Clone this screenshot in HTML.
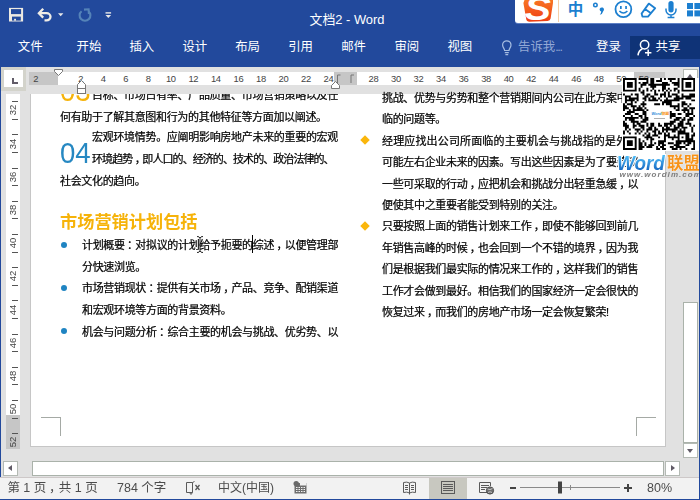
<!DOCTYPE html>
<html lang="zh-CN"><head><meta charset="utf-8"><title>文档2 - Word</title>
<style>
*{margin:0;padding:0;box-sizing:border-box}
html,body{width:700px;height:500px;overflow:hidden;background:#e1e1e1}
body{position:relative;font-family:"Liberation Sans","Noto Sans CJK SC",sans-serif;color:#222}
.abs,.tab,.ln,.st,.rn,.vn,.tk{position:absolute}
#top{left:0;top:0;width:700px;height:67px;background:#22499c}
#lborder{left:0;top:67px;width:1px;height:433px;background:#22499c}
#rborder{left:699px;top:67px;width:1px;height:433px;background:#22499c}
#bborder{left:0;top:499px;width:700px;height:1px;background:#22499c}
.tab{top:38px;font-size:12.4px;line-height:18px;color:#fff;white-space:nowrap}
#title{left:309.5px;top:9.5px;font-size:12.9px;line-height:20px;color:#fff;white-space:nowrap}
#share{left:630px;top:36px;width:70px;height:23px;background:#0f3377}
#ime{left:515px;top:0;width:185px;height:23px;background:#fff;border-bottom-left-radius:3px;box-shadow:0 1px 0 #5d7fc4}
#page{left:30px;top:94px;width:636px;height:353px;background:#fff;border-left:1px solid #c6c6c6;border-right:1px solid #c6c6c6;border-bottom:1px solid #c6c6c6}
.ln{font-size:11px;letter-spacing:-.33px;line-height:16px;height:16px;white-space:nowrap;text-align:justify;text-align-last:justify;color:#000;-webkit-text-stroke:.22px #000}
.ln.s{text-align-last:left;text-align:left}
.ln i{font-style:normal;position:relative;left:.22em}
.ln b{font-weight:normal;font-feature-settings:"halt"}
#status{left:0;top:477px;width:700px;height:23px;background:#f2f2f2;border-top:1px solid #cdc8c8}
.st{top:480px;font-size:12.5px;line-height:16px;color:#4c4c4c;white-space:nowrap}
.rn{top:71.6px;font-size:9.4px;line-height:13px;color:#444;width:20px;text-align:center;letter-spacing:-.3px}
.vn{left:6px;width:14px;height:14px;font-size:9.5px;line-height:14px;color:#444;text-align:center;transform:rotate(-90deg)}
.tk{left:12px;width:6px;height:1px;background:#555}
#root{position:absolute;left:0;top:0;width:700px;height:500px;overflow:hidden;opacity:.999}
</style></head><body><div id="root">

<div id="top" class="abs"></div>
<svg class="abs" style="left:0;top:0" width="130" height="30" viewBox="0 0 130 30">
<rect x="9" y="7.900" width="14.100" height="13.600" fill="#ece9e2"/>
<rect x="11" y="9.100" width="10.100" height="5" fill="#22499c"/>
<rect x="12" y="16.600" width="8.800" height="4" fill="#22499c"/>
<rect x="14.100" y="18.800" width="1.900" height="1.900" fill="#ece9e2"/>
<g fill="none" stroke="#efece6" stroke-width="2.300" stroke-linecap="butt">
<path d="M39.5 13.2 H46.5 A4 3.6 0 0 1 46.5 20.4 H44.5"/>
<path d="M43.2 8.8 L38.9 13.2 L43.2 17.6" stroke-linejoin="miter"/>
</g>
<path d="M58 13.2 h5.4 l-2.7 3z" fill="#e8e8e8"/>
<g fill="none" stroke="#5583b8" stroke-width="2.1">
<path d="M81.6 11.2 A5.4 5.4 0 1 0 88.4 11.2"/>
<path d="M84 9.6 L88.6 9.3 L88.9 14" />
</g>
<rect x="105.5" y="12.2" width="5.6" height="1.4" fill="#e8e8e8"/>
<path d="M105.5 15 h5.6 l-2.8 3z" fill="#e8e8e8"/>
</svg>
<div id="title" class="abs">文档2 - Word</div>
<div class="tab" style="left:17.8px">文件</div>
<div class="tab" style="left:76.6px">开始</div>
<div class="tab" style="left:129.4px">插入</div>
<div class="tab" style="left:182.4px">设计</div>
<div class="tab" style="left:235.2px">布局</div>
<div class="tab" style="left:288.2px">引用</div>
<div class="tab" style="left:341.2px">邮件</div>
<div class="tab" style="left:394.4px">审阅</div>
<div class="tab" style="left:447.4px">视图</div>
<svg class="abs" style="left:500.4px;top:38.8px" width="14" height="18" viewBox="0 0 14 18"><g fill="none" stroke="#a6bde2" stroke-width="1.2"><path d="M4.6 11.5 C4.6 9.5 2.6 8.6 2.6 6 A4.2 4.2 0 0 1 11 6 C11 8.6 9 9.5 9 11.5 Z"/><path d="M4.8 13.6 H8.8 M5.4 15.6 H8.2"/></g></svg>
<div class="tab" style="left:518px;color:#92a8d6">告诉我<span style="letter-spacing:-1.3px">...</span></div>
<div class="tab" style="left:596px">登录</div>
<div id="share" class="abs"></div>
<svg class="abs" style="left:636px;top:39px" width="18" height="18" viewBox="0 0 18 18"><g fill="none" stroke="#fff" stroke-width="1.5"><circle cx="8.6" cy="5.8" r="4.2"/><path d="M2 16.4 C2.4 12.8 4.6 10.6 6.4 9.8"/><path d="M12.2 10.6 V17 M9 13.8 H15.4"/></g></svg>
<div class="tab" style="left:655.5px">共享</div>
<div id="ime" class="abs"></div>
<svg class="abs" style="left:515px;top:0" width="185" height="24" viewBox="0 0 185 24">
<defs><linearGradient id="sg" x1="0" y1="0" x2="0" y2="1"><stop offset="0" stop-color="#f87524"/><stop offset="1" stop-color="#ee3d14"/></linearGradient><clipPath id="sc"><path d="M9.500 0 H38 L38 3 L35.600 18.600 Q35.200 21 32.600 21 L14.500 21.800 Q11.600 21.800 11.200 19 L8.400 3 Z"/></clipPath></defs><path d="M9.500 0 H38 L38 3 L35.600 18.600 Q35.200 21 32.600 21 L14.500 21.800 Q11.600 21.800 11.200 19 L8.400 3 Z" fill="url(#sg)"/>
<text x="0" y="0" transform="translate(22.800 19.800) scale(1.220 1)" font-family="Liberation Sans,sans-serif" font-weight="bold" font-style="italic" font-size="32.500" fill="#fff" text-anchor="middle" clip-path="none">S</text>
<rect x="43" y="0" width="1" height="22" fill="#f6cfa8"/>
<g fill="none" stroke="#1c7fd0" stroke-width="1.5">
<circle cx="108.4" cy="9.2" r="7.9" stroke-width="1.8"/>
<path d="M104.4 11 Q108.4 15 112.4 11"/>
<path d="M126.600 13.6 L133.800 3.600 L140.200 8.200 L133 16.600 H127.400 Z M130 9 L136 13.300" stroke-linejoin="round" stroke-width="1.800"/>
<path d="M151 8.5 V10 A5 5 0 0 0 161 10 V8.5 M156 15 V17.4 M152.6 17.4 H159.4"/>
</g>
<g fill="#1c7fd0">
<rect x="105" y="6" width="1.7" height="3"/><rect x="110.2" y="6" width="1.7" height="3"/>
<rect x="153.4" y="1" width="5.2" height="11.4" rx="2.6"/>
<rect x="172" y="3" width="6" height="6"/><rect x="179.4" y="3" width="6" height="6"/>
<rect x="172" y="10.4" width="6" height="6"/><rect x="179.4" y="10.4" width="6" height="6"/>
<circle cx="80.4" cy="5" r="2.500"/>
<path d="M84.600 9.6 a2.200 2.200 0 1 1 3.600 1.700 q-0.500 2.800 -3.400 3.500 q1.600 -1.600 1.400 -3.200 a2.200 2.200 0 0 1 -1.600 -2z"/>
</g>
<circle cx="80.4" cy="5" r="1" fill="#fff"/>
<text x="60.4" y="14.600" font-family="Liberation Sans,Noto Sans CJK SC,sans-serif" font-weight="bold" font-size="15.500" fill="#1c7fd0" text-anchor="middle">中</text>
</svg>
<div id="lborder" class="abs"></div>
<div class="abs" style="left:1px;top:67px;width:24.7px;height:24px;background:#d3d3cb"></div>
<div class="abs" style="left:4.2px;top:70.3px;width:18.4px;height:16.7px;background:#fff"></div>
<div class="abs" style="left:12px;top:78px;width:1.8px;height:6px;background:#625c68"></div><div class="abs" style="left:12px;top:82.2px;width:6px;height:1.8px;background:#625c68"></div>
<div class="abs" style="left:29px;top:72px;width:636px;height:13px;background:#fff"></div>
<div class="abs" style="left:29px;top:72px;width:29px;height:13px;background:#c6c6c6"></div>
<div class="abs" style="left:333.5px;top:72px;width:23.5px;height:13px;background:#c6c6c6"></div>
<div class="abs" style="left:633.5px;top:72px;width:31.5px;height:13px;background:#c6c6c6"></div>
<div class="rn" style="left:25.7px">2</div>
<div class="rn" style="left:70.7px">2</div>
<div class="rn" style="left:93.2px">4</div>
<div class="rn" style="left:115.8px">6</div>
<div class="rn" style="left:138.3px">8</div>
<div class="rn" style="left:160.8px">10</div>
<div class="rn" style="left:183.3px">12</div>
<div class="rn" style="left:205.8px">14</div>
<div class="rn" style="left:228.4px">16</div>
<div class="rn" style="left:250.9px">18</div>
<div class="rn" style="left:273.4px">20</div>
<div class="rn" style="left:295.9px">22</div>
<div class="rn" style="left:318.4px">24</div>
<div class="rn" style="left:363.5px">28</div>
<div class="rn" style="left:386.0px">30</div>
<div class="rn" style="left:408.5px">32</div>
<div class="rn" style="left:431.0px">34</div>
<div class="rn" style="left:453.6px">36</div>
<div class="rn" style="left:476.1px">38</div>
<div class="rn" style="left:498.6px">40</div>
<div class="rn" style="left:521.1px">42</div>
<div class="rn" style="left:543.6px">44</div>
<div class="rn" style="left:566.2px">46</div>
<div class="rn" style="left:588.7px">48</div>
<div class="rn" style="left:611.2px">50</div>
<div class="rn" style="left:633.7px">52</div>
<svg class="abs" style="left:50px;top:66px;z-index:5" width="320" height="32" viewBox="0 0 320 32">
<g fill="#fff" stroke="#777" stroke-width="1">
<path d="M4.5 3.5 H12.5 V5.5 L8.5 9.5 L4.5 5.5 Z"/>
<path d="M27.5 22.500 V18.5 L31.5 14.5 L35.5 18.5 V22.500 Z"/>
<rect x="27.5" y="22.500" width="8" height="5"/>
<path d="M281.5 22.5 V19.5 L285.5 15.5 L289.5 19.5 V22.5 Z"/>
</g>
<g fill="none" stroke="#777" stroke-width="1"><path d="M290.5 9 H287.5 V17 M304 9 H301 V17"/></g>
</svg>
<div class="abs" style="left:6px;top:94px;width:14px;height:355px;background:#fff"></div>
<div class="abs" style="left:6px;top:415px;width:14px;height:34px;background:#c6c6c6"></div>
<div class="vn" style="top:103.4px">32</div>
<div class="tk" style="top:101.1px"></div>
<div class="tk" style="top:118.7px"></div>
<div class="vn" style="top:136.6px">34</div>
<div class="tk" style="top:134.3px"></div>
<div class="tk" style="top:151.9px"></div>
<div class="vn" style="top:169.8px">36</div>
<div class="tk" style="top:167.5px"></div>
<div class="tk" style="top:185.1px"></div>
<div class="vn" style="top:203.0px">38</div>
<div class="tk" style="top:200.7px"></div>
<div class="tk" style="top:218.3px"></div>
<div class="vn" style="top:236.2px">40</div>
<div class="tk" style="top:233.9px"></div>
<div class="tk" style="top:251.5px"></div>
<div class="vn" style="top:269.4px">42</div>
<div class="tk" style="top:267.1px"></div>
<div class="tk" style="top:284.7px"></div>
<div class="vn" style="top:302.6px">44</div>
<div class="tk" style="top:300.3px"></div>
<div class="tk" style="top:317.9px"></div>
<div class="vn" style="top:335.8px">46</div>
<div class="tk" style="top:333.5px"></div>
<div class="tk" style="top:351.1px"></div>
<div class="vn" style="top:369.0px">48</div>
<div class="tk" style="top:366.7px"></div>
<div class="tk" style="top:384.3px"></div>
<div class="vn" style="top:402.2px">50</div>
<div class="tk" style="top:399.9px"></div>
<div class="tk" style="top:417.5px"></div>
<div class="vn" style="top:435.4px">52</div>
<div class="tk" style="top:433.1px"></div>
<div id="page" class="abs"></div>
<div class="abs" style="left:41px;top:417px;width:20px;height:1px;background:#a5aaa5"></div><div class="abs" style="left:60px;top:417px;width:1px;height:19px;background:#a5aaa5"></div>
<div class="abs" style="left:636px;top:417px;width:20px;height:1px;background:#a5aaa5"></div><div class="abs" style="left:636px;top:417px;width:1px;height:19px;background:#a5aaa5"></div>
<div class="abs" style="left:31px;top:94px;width:634px;height:30px;overflow:hidden">
<div class="abs" style="left:29px;top:-18.5px;font-size:30px;line-height:30px;color:#f6b30a;transform-origin:0 0;transform:scaleX(.92);white-space:nowrap">03</div>
<div class="ln" style="left:61px;top:-6.6px;width:246px">目标、市场占有率、产品质量、市场营销策略以及任</div>
</div>
<div class="ln s" style="left:60px;top:109.4px;width:278px">何有助于了解其意图和行为的其他特征等方面加以阐述。</div>
<div class="abs" style="left:59.5px;top:135.5px;font-size:30px;line-height:34px;color:#2688c2;transform-origin:0 0;transform:scaleX(.92);white-space:nowrap">04</div>
<div class="ln" style="left:92px;top:129.3px;width:246px">宏观环境情势。应阐明影响房地产未来的重要的宏观</div>
<div class="ln s" style="left:92px;top:150.7px;width:246px;letter-spacing:-.93px">环境趋势<i>，</i>即人口的、经济的、技术的、政治法律的、</div>
<div class="ln s" style="left:60px;top:173.3px;width:278px">社会文化的趋向。</div>
<div class="abs" style="left:60px;top:210px;font-size:17.2px;line-height:24px;font-weight:bold;color:#f6b30a;white-space:nowrap">市场营销计划包括</div>
<div class="ln" style="left:82px;top:237.2px;width:256px">计划概要<i>：</i>对拟议的计划给予扼要的综述<i>，</i>以便管理部</div>
<div class="abs" style="left:60.9px;top:241.6px;width:6.4px;height:6.4px;border-radius:3.2px;background:#1f84c2"></div>
<div class="ln s" style="left:82px;top:258.8px;width:256px">分快速浏览。</div>
<div class="ln" style="left:82px;top:280.4px;width:256px">市场营销现状<i>：</i>提供有关市场<i>，</i>产品、竞争、配销渠道</div>
<div class="abs" style="left:60.9px;top:284.8px;width:6.4px;height:6.4px;border-radius:3.2px;background:#1f84c2"></div>
<div class="ln s" style="left:82px;top:302.0px;width:256px">和宏观环境等方面的背景资料。</div>
<div class="ln" style="left:82px;top:323.6px;width:256px">机会与问题分析<i>：</i>综合主要的机会与挑战、优劣势、以</div>
<div class="abs" style="left:60.9px;top:328.0px;width:6.4px;height:6.4px;border-radius:3.2px;background:#1f84c2"></div>
<div class="ln" style="left:382px;top:89.7px;width:256px">挑战、优势与劣势和整个营销期间内公司在此方案中面</div>
<div class="ln s" style="left:382px;top:111.1px;width:256px">临的问题等。</div>
<div class="ln" style="left:382px;top:132.6px;width:256px">经理应找出公司所面临的主要机会与挑战指的是外部</div>
<div class="abs" style="left:361.3px;top:136.4px;width:8px;height:8px;background:#fab60c;transform:rotate(45deg) scale(.84)"></div>
<div class="ln" style="left:382px;top:154.0px;width:256px">可能左右企业未来的因素。写出这些因素是为了要建议</div>
<div class="ln" style="left:382px;top:175.5px;width:256px">一些可采取的行动<i>，</i>应把机会和挑战分出轻重急缓<i>，</i>以</div>
<div class="ln s" style="left:382px;top:196.9px;width:256px">便使其中之重要者能受到特别的关注。</div>
<div class="ln" style="left:382px;top:218.4px;width:256px">只要按照上面的销售计划来工作<i>，</i>即使不能够回到前几</div>
<div class="abs" style="left:361.3px;top:222.2px;width:8px;height:8px;background:#fab60c;transform:rotate(45deg) scale(.84)"></div>
<div class="ln" style="left:382px;top:239.8px;width:256px">年销售高峰的时候<i>，</i>也会回到一个不错的境界<i>，</i>因为我</div>
<div class="ln" style="left:382px;top:261.3px;width:256px">们是根据我们最实际的情况来工作的<i>，</i>这样我们的销售</div>
<div class="ln" style="left:382px;top:282.7px;width:256px">工作才会做到最好。相信我们的国家经济一定会很快的</div>
<div class="ln s" style="left:382px;top:304.2px;width:256px">恢复过来<i>，</i>而我们的房地产市场一定会恢复繁荣!</div>
<div class="abs" style="left:252px;top:235px;width:1px;height:18px;background:#000"></div>
<svg class="abs" style="left:194.900px;top:234.500px" width="10" height="19" viewBox="0 0 10 19"><path d="M2 1.500 Q4.500 1.500 5 3 Q5.500 1.500 8 1.500 M5 3 V16 M2 17.500 Q4.500 17.500 5 16 Q5.500 17.500 8 17.500 M3.500 10 H6.500" fill="none" stroke="#222" stroke-width="1"/></svg>
<div class="abs" style="left:683px;top:69px;width:15px;height:14px;background:#fff;border:1px solid #b4bab4"></div>
<div class="abs" style="left:687px;top:74px;width:0;height:0;border-left:3.5px solid transparent;border-right:3.5px solid transparent;border-bottom:4px solid #605a66"></div>
<div class="abs" style="left:683px;top:302px;width:15px;height:141px;background:#fff;border:1px solid #aab2aa"></div>
<div class="abs" style="left:683px;top:443px;width:15px;height:15px;background:#fff;border:1px solid #b4bab4"></div>
<div class="abs" style="left:687px;top:449px;width:0;height:0;border-left:3.5px solid transparent;border-right:3.5px solid transparent;border-top:4px solid #605a66"></div>
<div class="abs" style="left:3px;top:461px;width:15px;height:15px;background:#fff;border:1px solid #b4bab4"></div>
<div class="abs" style="left:8px;top:465px;width:0;height:0;border-top:3.5px solid transparent;border-bottom:3.5px solid transparent;border-right:4px solid #605a66"></div>
<div class="abs" style="left:32px;top:461px;width:632px;height:15px;background:#fff;border:1px solid #aab2aa"></div>
<div class="abs" style="left:665px;top:461px;width:15px;height:15px;background:#fff;border:1px solid #b4bab4"></div>
<div class="abs" style="left:671px;top:465px;width:0;height:0;border-top:3.5px solid transparent;border-bottom:3.5px solid transparent;border-left:4px solid #605a66"></div>
<div class="abs" style="left:622.4px;top:77.6px;width:76.4px;height:73px;background:#fff"></div>
<svg class="abs" style="left:622.9px;top:78px" width="72.2" height="72" viewBox="0 0 71.2 71.2" preserveAspectRatio="none"><path d="M0.00 0.00h13.47v1.92h-13.47zM15.39 0.00h9.62v1.92h-9.62zM26.94 0.00h3.85v1.92h-3.85zM36.56 0.00h1.92v1.92h-1.92zM40.41 0.00h1.92v1.92h-1.92zM44.26 0.00h7.70v1.92h-7.70zM53.88 0.00h1.92v1.92h-1.92zM57.73 0.00h13.47v1.92h-13.47zM0.00 1.92h1.92v1.92h-1.92zM11.55 1.92h1.92v1.92h-1.92zM23.09 1.92h1.92v1.92h-1.92zM26.94 1.92h3.85v1.92h-3.85zM32.71 1.92h5.77v1.92h-5.77zM46.18 1.92h1.92v1.92h-1.92zM53.88 1.92h1.92v1.92h-1.92zM57.73 1.92h1.92v1.92h-1.92zM69.28 1.92h1.92v1.92h-1.92zM0.00 3.85h1.92v1.92h-1.92zM3.85 3.85h5.77v1.92h-5.77zM11.55 3.85h1.92v1.92h-1.92zM15.39 3.85h1.92v1.92h-1.92zM19.24 3.85h5.77v1.92h-5.77zM26.94 3.85h3.85v1.92h-3.85zM38.49 3.85h5.77v1.92h-5.77zM48.11 3.85h7.70v1.92h-7.70zM57.73 3.85h1.92v1.92h-1.92zM61.58 3.85h5.77v1.92h-5.77zM69.28 3.85h1.92v1.92h-1.92zM0.00 5.77h1.92v1.92h-1.92zM3.85 5.77h5.77v1.92h-5.77zM11.55 5.77h1.92v1.92h-1.92zM17.32 5.77h5.77v1.92h-5.77zM25.02 5.77h21.17v1.92h-21.17zM50.03 5.77h5.77v1.92h-5.77zM57.73 5.77h1.92v1.92h-1.92zM61.58 5.77h5.77v1.92h-5.77zM69.28 5.77h1.92v1.92h-1.92zM0.00 7.70h1.92v1.92h-1.92zM3.85 7.70h5.77v1.92h-5.77zM11.55 7.70h1.92v1.92h-1.92zM17.32 7.70h1.92v1.92h-1.92zM26.94 7.70h5.77v1.92h-5.77zM38.49 7.70h3.85v1.92h-3.85zM53.88 7.70h1.92v1.92h-1.92zM57.73 7.70h1.92v1.92h-1.92zM61.58 7.70h5.77v1.92h-5.77zM69.28 7.70h1.92v1.92h-1.92zM0.00 9.62h1.92v1.92h-1.92zM11.55 9.62h1.92v1.92h-1.92zM15.39 9.62h1.92v1.92h-1.92zM23.09 9.62h1.92v1.92h-1.92zM28.86 9.62h1.92v1.92h-1.92zM38.49 9.62h3.85v1.92h-3.85zM44.26 9.62h1.92v1.92h-1.92zM50.03 9.62h3.85v1.92h-3.85zM57.73 9.62h1.92v1.92h-1.92zM69.28 9.62h1.92v1.92h-1.92zM0.00 11.55h13.47v1.92h-13.47zM15.39 11.55h1.92v1.92h-1.92zM19.24 11.55h1.92v1.92h-1.92zM23.09 11.55h1.92v1.92h-1.92zM26.94 11.55h1.92v1.92h-1.92zM30.79 11.55h1.92v1.92h-1.92zM34.64 11.55h1.92v1.92h-1.92zM38.49 11.55h1.92v1.92h-1.92zM42.34 11.55h1.92v1.92h-1.92zM46.18 11.55h1.92v1.92h-1.92zM50.03 11.55h1.92v1.92h-1.92zM53.88 11.55h1.92v1.92h-1.92zM57.73 11.55h13.47v1.92h-13.47zM17.32 13.47h3.85v1.92h-3.85zM30.79 13.47h1.92v1.92h-1.92zM40.41 13.47h1.92v1.92h-1.92zM44.26 13.47h1.92v1.92h-1.92zM53.88 13.47h1.92v1.92h-1.92zM0.00 15.39h1.92v1.92h-1.92zM7.70 15.39h1.92v1.92h-1.92zM11.55 15.39h3.85v1.92h-3.85zM19.24 15.39h1.92v1.92h-1.92zM23.09 15.39h3.85v1.92h-3.85zM30.79 15.39h3.85v1.92h-3.85zM36.56 15.39h5.77v1.92h-5.77zM44.26 15.39h1.92v1.92h-1.92zM48.11 15.39h5.77v1.92h-5.77zM57.73 15.39h1.92v1.92h-1.92zM65.43 15.39h5.77v1.92h-5.77zM1.92 17.32h5.77v1.92h-5.77zM13.47 17.32h1.92v1.92h-1.92zM21.17 17.32h3.85v1.92h-3.85zM26.94 17.32h3.85v1.92h-3.85zM36.56 17.32h1.92v1.92h-1.92zM40.41 17.32h1.92v1.92h-1.92zM44.26 17.32h3.85v1.92h-3.85zM51.96 17.32h3.85v1.92h-3.85zM57.73 17.32h13.47v1.92h-13.47zM1.92 19.24h1.92v1.92h-1.92zM5.77 19.24h9.62v1.92h-9.62zM19.24 19.24h3.85v1.92h-3.85zM25.02 19.24h1.92v1.92h-1.92zM28.86 19.24h3.85v1.92h-3.85zM34.64 19.24h1.92v1.92h-1.92zM42.34 19.24h1.92v1.92h-1.92zM50.03 19.24h9.62v1.92h-9.62zM61.58 19.24h5.77v1.92h-5.77zM1.92 21.17h9.62v1.92h-9.62zM13.47 21.17h1.92v1.92h-1.92zM21.17 21.17h1.92v1.92h-1.92zM25.02 21.17h9.62v1.92h-9.62zM36.56 21.17h1.92v1.92h-1.92zM40.41 21.17h15.39v1.92h-15.39zM67.35 21.17h3.85v1.92h-3.85zM1.92 23.09h1.92v1.92h-1.92zM7.70 23.09h1.92v1.92h-1.92zM11.55 23.09h1.92v1.92h-1.92zM19.24 23.09h1.92v1.92h-1.92zM38.49 23.09h9.62v1.92h-9.62zM57.73 23.09h3.85v1.92h-3.85zM0.00 25.02h1.92v1.92h-1.92zM3.85 25.02h5.77v1.92h-5.77zM17.32 25.02h5.77v1.92h-5.77zM30.79 25.02h5.77v1.92h-5.77zM38.49 25.02h1.92v1.92h-1.92zM42.34 25.02h5.77v1.92h-5.77zM53.88 25.02h1.92v1.92h-1.92zM57.73 25.02h5.77v1.92h-5.77zM65.43 25.02h1.92v1.92h-1.92zM0.00 26.94h3.85v1.92h-3.85zM7.70 26.94h5.77v1.92h-5.77zM15.39 26.94h1.92v1.92h-1.92zM19.24 26.94h1.92v1.92h-1.92zM46.18 26.94h9.62v1.92h-9.62zM57.73 26.94h1.92v1.92h-1.92zM63.50 26.94h1.92v1.92h-1.92zM0.00 28.86h5.77v1.92h-5.77zM9.62 28.86h1.92v1.92h-1.92zM13.47 28.86h5.77v1.92h-5.77zM21.17 28.86h1.92v1.92h-1.92zM50.03 28.86h1.92v1.92h-1.92zM53.88 28.86h1.92v1.92h-1.92zM59.65 28.86h3.85v1.92h-3.85zM65.43 28.86h5.77v1.92h-5.77zM0.00 30.79h1.92v1.92h-1.92zM5.77 30.79h1.92v1.92h-1.92zM9.62 30.79h11.55v1.92h-11.55zM23.09 30.79h1.92v1.92h-1.92zM51.96 30.79h3.85v1.92h-3.85zM57.73 30.79h7.70v1.92h-7.70zM67.35 30.79h1.92v1.92h-1.92zM3.85 32.71h7.70v1.92h-7.70zM19.24 32.71h3.85v1.92h-3.85zM46.18 32.71h1.92v1.92h-1.92zM59.65 32.71h1.92v1.92h-1.92zM63.50 32.71h1.92v1.92h-1.92zM67.35 32.71h1.92v1.92h-1.92zM1.92 34.64h5.77v1.92h-5.77zM11.55 34.64h3.85v1.92h-3.85zM19.24 34.64h3.85v1.92h-3.85zM46.18 34.64h5.77v1.92h-5.77zM53.88 34.64h3.85v1.92h-3.85zM61.58 34.64h7.70v1.92h-7.70zM0.00 36.56h1.92v1.92h-1.92zM7.70 36.56h1.92v1.92h-1.92zM15.39 36.56h3.85v1.92h-3.85zM21.17 36.56h1.92v1.92h-1.92zM46.18 36.56h5.77v1.92h-5.77zM61.58 36.56h3.85v1.92h-3.85zM69.28 36.56h1.92v1.92h-1.92zM1.92 38.49h13.47v1.92h-13.47zM17.32 38.49h1.92v1.92h-1.92zM21.17 38.49h3.85v1.92h-3.85zM46.18 38.49h1.92v1.92h-1.92zM51.96 38.49h5.77v1.92h-5.77zM59.65 38.49h1.92v1.92h-1.92zM65.43 38.49h3.85v1.92h-3.85zM1.92 40.41h1.92v1.92h-1.92zM5.77 40.41h5.77v1.92h-5.77zM19.24 40.41h5.77v1.92h-5.77zM50.03 40.41h5.77v1.92h-5.77zM57.73 40.41h3.85v1.92h-3.85zM63.50 40.41h5.77v1.92h-5.77zM0.00 42.34h1.92v1.92h-1.92zM7.70 42.34h7.70v1.92h-7.70zM17.32 42.34h5.77v1.92h-5.77zM46.18 42.34h5.77v1.92h-5.77zM55.81 42.34h3.85v1.92h-3.85zM63.50 42.34h1.92v1.92h-1.92zM0.00 44.26h3.85v1.92h-3.85zM9.62 44.26h1.92v1.92h-1.92zM13.47 44.26h3.85v1.92h-3.85zM23.09 44.26h1.92v1.92h-1.92zM26.94 44.26h3.85v1.92h-3.85zM34.64 44.26h1.92v1.92h-1.92zM40.41 44.26h9.62v1.92h-9.62zM53.88 44.26h5.77v1.92h-5.77zM61.58 44.26h5.77v1.92h-5.77zM0.00 46.18h5.77v1.92h-5.77zM9.62 46.18h3.85v1.92h-3.85zM15.39 46.18h5.77v1.92h-5.77zM23.09 46.18h1.92v1.92h-1.92zM26.94 46.18h3.85v1.92h-3.85zM34.64 46.18h3.85v1.92h-3.85zM40.41 46.18h3.85v1.92h-3.85zM46.18 46.18h1.92v1.92h-1.92zM50.03 46.18h1.92v1.92h-1.92zM53.88 46.18h5.77v1.92h-5.77zM65.43 46.18h1.92v1.92h-1.92zM69.28 46.18h1.92v1.92h-1.92zM1.92 48.11h3.85v1.92h-3.85zM9.62 48.11h1.92v1.92h-1.92zM17.32 48.11h3.85v1.92h-3.85zM25.02 48.11h3.85v1.92h-3.85zM30.79 48.11h1.92v1.92h-1.92zM38.49 48.11h1.92v1.92h-1.92zM42.34 48.11h3.85v1.92h-3.85zM50.03 48.11h5.77v1.92h-5.77zM57.73 48.11h5.77v1.92h-5.77zM67.35 48.11h1.92v1.92h-1.92zM1.92 50.03h1.92v1.92h-1.92zM5.77 50.03h1.92v1.92h-1.92zM11.55 50.03h5.77v1.92h-5.77zM19.24 50.03h1.92v1.92h-1.92zM23.09 50.03h5.77v1.92h-5.77zM30.79 50.03h3.85v1.92h-3.85zM38.49 50.03h15.39v1.92h-15.39zM55.81 50.03h1.92v1.92h-1.92zM59.65 50.03h1.92v1.92h-1.92zM67.35 50.03h1.92v1.92h-1.92zM0.00 51.96h1.92v1.92h-1.92zM3.85 51.96h1.92v1.92h-1.92zM13.47 51.96h1.92v1.92h-1.92zM17.32 51.96h1.92v1.92h-1.92zM23.09 51.96h1.92v1.92h-1.92zM28.86 51.96h3.85v1.92h-3.85zM34.64 51.96h1.92v1.92h-1.92zM38.49 51.96h1.92v1.92h-1.92zM42.34 51.96h1.92v1.92h-1.92zM48.11 51.96h3.85v1.92h-3.85zM53.88 51.96h7.70v1.92h-7.70zM67.35 51.96h1.92v1.92h-1.92zM0.00 53.88h1.92v1.92h-1.92zM5.77 53.88h1.92v1.92h-1.92zM11.55 53.88h1.92v1.92h-1.92zM15.39 53.88h1.92v1.92h-1.92zM21.17 53.88h1.92v1.92h-1.92zM25.02 53.88h1.92v1.92h-1.92zM30.79 53.88h1.92v1.92h-1.92zM34.64 53.88h3.85v1.92h-3.85zM40.41 53.88h1.92v1.92h-1.92zM44.26 53.88h1.92v1.92h-1.92zM53.88 53.88h11.55v1.92h-11.55zM69.28 53.88h1.92v1.92h-1.92zM19.24 55.81h1.92v1.92h-1.92zM23.09 55.81h3.85v1.92h-3.85zM28.86 55.81h5.77v1.92h-5.77zM40.41 55.81h5.77v1.92h-5.77zM50.03 55.81h1.92v1.92h-1.92zM53.88 55.81h1.92v1.92h-1.92zM61.58 55.81h3.85v1.92h-3.85zM67.35 55.81h3.85v1.92h-3.85zM0.00 57.73h13.47v1.92h-13.47zM21.17 57.73h7.70v1.92h-7.70zM34.64 57.73h1.92v1.92h-1.92zM40.41 57.73h1.92v1.92h-1.92zM44.26 57.73h11.55v1.92h-11.55zM57.73 57.73h1.92v1.92h-1.92zM61.58 57.73h3.85v1.92h-3.85zM67.35 57.73h1.92v1.92h-1.92zM0.00 59.65h1.92v1.92h-1.92zM11.55 59.65h1.92v1.92h-1.92zM15.39 59.65h1.92v1.92h-1.92zM23.09 59.65h1.92v1.92h-1.92zM26.94 59.65h3.85v1.92h-3.85zM40.41 59.65h1.92v1.92h-1.92zM48.11 59.65h1.92v1.92h-1.92zM53.88 59.65h1.92v1.92h-1.92zM61.58 59.65h7.70v1.92h-7.70zM0.00 61.58h1.92v1.92h-1.92zM3.85 61.58h5.77v1.92h-5.77zM11.55 61.58h1.92v1.92h-1.92zM15.39 61.58h1.92v1.92h-1.92zM19.24 61.58h1.92v1.92h-1.92zM26.94 61.58h1.92v1.92h-1.92zM34.64 61.58h7.70v1.92h-7.70zM51.96 61.58h19.24v1.92h-19.24zM0.00 63.50h1.92v1.92h-1.92zM3.85 63.50h5.77v1.92h-5.77zM11.55 63.50h1.92v1.92h-1.92zM15.39 63.50h3.85v1.92h-3.85zM21.17 63.50h1.92v1.92h-1.92zM26.94 63.50h1.92v1.92h-1.92zM30.79 63.50h1.92v1.92h-1.92zM34.64 63.50h5.77v1.92h-5.77zM44.26 63.50h5.77v1.92h-5.77zM51.96 63.50h5.77v1.92h-5.77zM59.65 63.50h1.92v1.92h-1.92zM63.50 63.50h3.85v1.92h-3.85zM69.28 63.50h1.92v1.92h-1.92zM0.00 65.43h1.92v1.92h-1.92zM3.85 65.43h5.77v1.92h-5.77zM11.55 65.43h1.92v1.92h-1.92zM15.39 65.43h3.85v1.92h-3.85zM21.17 65.43h1.92v1.92h-1.92zM25.02 65.43h5.77v1.92h-5.77zM34.64 65.43h1.92v1.92h-1.92zM38.49 65.43h3.85v1.92h-3.85zM50.03 65.43h5.77v1.92h-5.77zM61.58 65.43h3.85v1.92h-3.85zM69.28 65.43h1.92v1.92h-1.92zM0.00 67.35h1.92v1.92h-1.92zM11.55 67.35h1.92v1.92h-1.92zM15.39 67.35h5.77v1.92h-5.77zM23.09 67.35h5.77v1.92h-5.77zM32.71 67.35h1.92v1.92h-1.92zM36.56 67.35h3.85v1.92h-3.85zM46.18 67.35h3.85v1.92h-3.85zM51.96 67.35h9.62v1.92h-9.62zM69.28 67.35h1.92v1.92h-1.92zM0.00 69.28h13.47v1.92h-13.47zM15.39 69.28h3.85v1.92h-3.85zM32.71 69.28h3.85v1.92h-3.85zM38.49 69.28h3.85v1.92h-3.85zM48.11 69.28h5.77v1.92h-5.77zM55.81 69.28h1.92v1.92h-1.92zM61.58 69.28h1.92v1.92h-1.92zM67.35 69.28h3.85v1.92h-3.85z" fill="#000"/></svg>
<div class="abs" style="left:651.5px;top:110.5px;font-size:3.9px;line-height:5px;font-weight:bold;font-style:italic;color:#2a8ad8;white-space:nowrap">Word<span style="color:#f7941d;font-style:normal">联盟</span></div><div class="abs" style="left:654px;top:117.5px;width:11px;height:1px;background:#b0b0b0"></div>
<div class="abs" style="left:616.8px;top:151.6px;width:90px;font-size:20.6px;line-height:22px;font-weight:bold;font-style:italic;white-space:nowrap;transform-origin:0 0;transform:scaleX(.915);color:#fff;-webkit-text-stroke:2px #fff">Word</div>
<div class="abs" style="left:616.8px;top:151.6px;width:90px;font-size:20.6px;line-height:22px;font-weight:bold;font-style:italic;white-space:nowrap;transform-origin:0 0;transform:scaleX(.915);color:#2a8fe0;background:linear-gradient(#4dbaf6 20%,#1a6cc4 80%);-webkit-background-clip:text;background-clip:text;-webkit-text-fill-color:transparent">Word</div>
<div class="abs" style="left:667px;top:151.5px;font-size:16.5px;line-height:22px;font-weight:bold;color:#f7931a;white-space:nowrap;text-shadow:0 0 1px #fff,0 0 1px #fff">联盟</div>
<div class="abs" style="left:619.5px;top:170.4px;font-size:8px;line-height:10px;font-weight:bold;font-style:italic;color:#7e7e7e;white-space:nowrap;letter-spacing:1.05px">www.wordlm.com</div>
<div id="status" class="abs"></div>
<div class="st" style="left:7.4px">第 1 页<span style="position:relative;left:.22em">，</span>共 1 页</div>
<div class="st" style="left:117px">784 个字</div>
<div class="st" style="left:218px;font-size:12px">中文(中国)</div>
<div class="st" style="left:647px">80%</div>
<div class="abs" style="left:429px;top:478px;width:38px;height:21px;background:#c8c8c0"></div>
<svg class="abs" style="left:180px;top:478px" width="470" height="22" viewBox="0 0 470 22">
<g fill="none" stroke="#5a5a5a" stroke-width="1">
<path d="M6.500 4.500 H12.500 V14.500 H6.500 Z M12.500 4.500 L14.500 3.500 M9.500 14.500 L11 16.500 L12.500 14.500"/>
<path d="M15.500 7 L19.500 12 M19.500 7 L15.500 12" stroke-width="1.300"/>
<path d="M223.500 4.500 Q227 3.500 229.500 5 Q232 3.500 235.500 4.500 V14.500 Q232 13.500 229.500 15 Q227 13.500 223.500 14.500 Z M229.500 5 V16.500"/>
<path d="M225 7.500 H228 M225 9.500 H228 M225 11.500 H228 M231 7.500 H234 M231 9.500 H234 M231 11.500 H234"/>
<rect x="261.500" y="3.500" width="13" height="12"/>
<path d="M263 6.500 H273 M263 8.500 H273 M263 10.500 H273 M263 12.500 H273"/>
<path d="M309 14.500 H299.500 V4.500 H310.500 V8"/>
<path d="M301 7.500 H309 M301 9.500 H307 M301 11.500 H305"/>
<path d="M340 9.500 H440" stroke="#8a8a8a"/>
<path d="M390.500 7 V12" stroke="#8a8a8a"/>
</g>
<circle cx="310" cy="12.500" r="3.600" fill="#707070" stroke="#4a4a4a" stroke-width="1"/>
<path d="M307.500 11 Q310 12.500 312.500 10.500 M308 14.500 Q310 13 312 14.500" fill="none" stroke="#d8d8d8" stroke-width=".8"/>
<rect x="114.500" y="5" width="12" height="10.500" fill="#6e6e6e"/>
<rect x="120" y="5" width="6.500" height="2.500" fill="#f2f2f2"/>
<path d="M116 9.500 H126 M116 11.500 H126 M116 13.500 H126" stroke="#f2f2f2" stroke-width="1" stroke-dasharray="1.500 1"/>
<circle cx="116.200" cy="5.600" r="2.700" fill="#6a6a6a"/>
<rect x="330" y="9" width="6" height="2" fill="#444"/>
<rect x="444" y="9" width="8" height="2" fill="#444"/><rect x="447" y="6" width="2" height="8" fill="#444"/>
<rect x="378" y="3.500" width="4" height="12" fill="#444"/>
</svg>
<div id="rborder" class="abs"></div><div id="bborder" class="abs"></div>
</div></body></html>
